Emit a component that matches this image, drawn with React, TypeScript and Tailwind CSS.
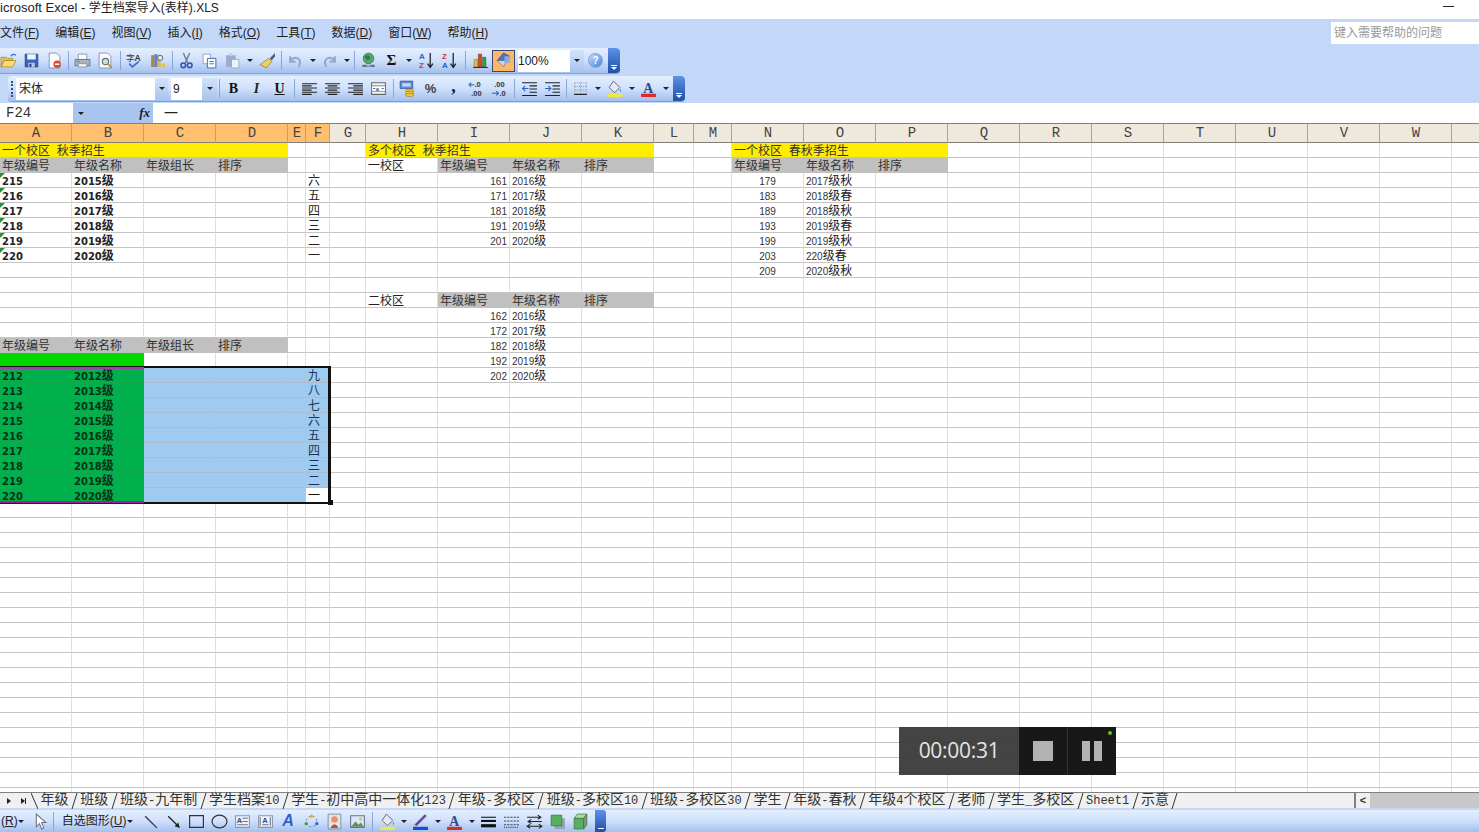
import type { ReactNode } from "react";

const colLetters = "ABCDEFGHIJKLMNOPQRSTUVWX".split("");
const ROWS = 44;

type Cell = { t?: string; cls?: string; span?: string; n?: number; bold?: boolean; tick?: boolean };

const GRID = "border-r border-b border-r-[#dedede] border-b-[#c4c4c4]";
const YELLOW = "bg-[#ffee00] border-r border-b border-r-[#ffee00] border-b-[#c4c4c4] text-[#333]";
const GREY = "bg-[#c0c0c0] border-r border-b border-r-[#c0c0c0] border-b-[#c0c0c0] text-[#333]";
const SEL_GREEN = "bg-[#00b04c] border-r border-b border-r-[#00b04c] border-b-[#12a84e] text-[#0a3018]";
const SEL_BLUE = "bg-[#9fcbf0] border-r border-b border-r-[#a6c9e8] border-b-[#aebccb] text-[#1d3350]";

const cells: Record<string, Cell> = {};
const put = (r: number, c: string, v: Cell) => {
  cells[r + c] = v;
};

put(1, "A", { t: "一个校区  秋季招生", cls: YELLOW, span: "col-span-4", n: 4 });
put(1, "H", { t: "多个校区  秋季招生", cls: YELLOW, span: "col-span-4", n: 4 });
put(1, "N", { t: "一个校区  春秋季招生", cls: YELLOW, span: "col-span-3", n: 3 });

const headA = ["年级编号", "年级名称", "年级组长", "排序"];
[2, 14].forEach((r) => {
  ["A", "B", "C", "D"].forEach((c, i) => put(r, c, { t: headA[i], cls: GREY }));
});
const headI = ["年级编号", "年级名称", "排序"];
[2, 11].forEach((r) => {
  ["I", "J", "K"].forEach((c, i) => put(r, c, { t: headI[i], cls: GREY }));
});
["N", "O", "P"].forEach((c, i) => put(2, c, { t: headI[i], cls: GREY }));
put(2, "H", { t: "一校区" });
put(11, "H", { t: "二校区" });

["215", "216", "217", "218", "219", "220"].forEach((id, i) => {
  put(3 + i, "A", { t: id, bold: true, tick: true });
  put(3 + i, "B", { t: `20${id.slice(1)}级`, bold: true });
  put(3 + i, "F", { t: "六五四三二一"[i] });
});

[
  ["161", "2016级"],
  ["171", "2017级"],
  ["181", "2018级"],
  ["191", "2019级"],
  ["201", "2020级"],
].forEach(([a, b], i) => {
  put(3 + i, "I", { t: a, cls: "text-right" });
  put(3 + i, "J", { t: b });
});
[
  ["162", "2016级"],
  ["172", "2017级"],
  ["182", "2018级"],
  ["192", "2019级"],
  ["202", "2020级"],
].forEach(([a, b], i) => {
  put(12 + i, "I", { t: a, cls: "text-right" });
  put(12 + i, "J", { t: b });
});
[
  ["179", "2017级秋"],
  ["183", "2018级春"],
  ["189", "2018级秋"],
  ["193", "2019级春"],
  ["199", "2019级秋"],
  ["203", "220级春"],
  ["209", "2020级秋"],
].forEach(([a, b], i) => {
  put(3 + i, "N", { t: a, cls: "text-center" });
  put(3 + i, "O", { t: b });
});

put(15, "A", { cls: "bg-[#00d800] border-r border-b border-[#00d800]" });
put(15, "B", { cls: "bg-[#00d800] border-r border-b border-[#00d800]" });

["212", "213", "214", "215", "216", "217", "218", "219", "220"].forEach((id, i) => {
  const r = 16 + i;
  put(r, "A", { t: id, bold: true, cls: SEL_GREEN });
  put(r, "B", { t: `20${id.slice(1)}级`, bold: true, cls: SEL_GREEN });
  ["C", "D", "E"].forEach((c) => put(r, c, { cls: SEL_BLUE }));
  put(r, "F", { t: "九八七六五四三二一"[i], cls: r === 24 ? "bg-white border-r border-b border-white text-[#111]" : SEL_BLUE });
});

function Mixed({ text, bold }: { text: string; bold?: boolean }) {
  const parts = text.split(/(\d+)/);
  return (
    <>
      {parts.map((p, i) =>
        /^\d+$/.test(p) ? (
          <span key={i} className={bold ? "font-['DejaVu_Sans'] text-[10px]" : "text-[10px] text-[#333]"}>
            {p}
          </span>
        ) : (
          <span key={i} className="whitespace-pre">
            {p}
          </span>
        ),
      )}
    </>
  );
}

function Sheet() {
  const body: ReactNode[] = [];
  for (let r = 1; r <= ROWS; r++) {
    let skip = 0;
    colLetters.forEach((c) => {
      if (skip > 0) {
        skip--;
        return;
      }
      const cell = cells[r + c];
      if (cell?.n) skip = cell.n - 1;
      const hasFrame = cell?.cls?.includes("border-r");
      body.push(
        <div
          key={r + c}
          className={`relative min-w-0 whitespace-nowrap px-[2px] text-[12px] leading-[17px] ${cell?.span ?? ""} ${
            hasFrame ? "" : GRID
          } ${cell?.cls ?? ""} ${cell?.bold ? "font-bold" : ""}`}
        >
          {cell?.tick && (
            <div className="absolute left-0 top-0 border-t-[5px] border-r-[5px] border-t-[#2a8f3c] border-r-transparent" />
          )}
          {cell?.t && <Mixed text={cell.t} bold={cell.bold} />}
        </div>,
      );
    });
  }
  return (
    <div className="relative min-h-0 flex-1 overflow-hidden bg-white">
      <div className="grid w-max grid-cols-[72px_72px_72px_72px_18px_24px_36px_72px_72px_72px_72px_40px_38px_72px_72px_72px_72px_72px_72px_72px_72px_72px_72px_72px] grid-rows-[20px] auto-rows-[15px]">
        {colLetters.map((c, i) => (
          <div
            key={c}
            className={`flex items-center justify-center border-y border-r border-y-[#808078] border-r-[#a8a498] pl-[1px] font-['Liberation_Mono'] text-[14px] text-[#444] ${
              i < 6 ? "bg-[#ffbe70]" : "bg-[#efe9dd]"
            }`}
          >
            {c === "X" ? "" : c}
          </div>
        ))}
        {body}
      </div>
      {/* selection frame */}
      <div className="absolute left-0 top-[243px] h-[138px] w-[331px] border-t-[2px] border-r-[3px] border-b-[2px] border-[#111]" />
      <div className="absolute left-0 top-[244px] h-[2px] w-[144px] bg-[#a040a0]" />
      <div className="absolute left-0 top-[378px] h-[2px] w-[144px] bg-[#a0209a]" />
      <div className="absolute left-[328px] top-[377px] h-[5px] w-[5px] bg-[#111]" />
      {/* recorder */}
      <div className="absolute left-[899px] top-[604px] flex h-[48px] w-[217px]">
        <div className="flex w-[120px] items-center justify-center bg-[#3a3a3a]/95 font-['Open_Sans'] text-[21px] tracking-[-0.3px] text-[#e4e4e4]">
          00:00:31
        </div>
        <div className="relative flex flex-1 items-center bg-[#181818]">
          <div className="ml-[14px] h-[20px] w-[20px] bg-[#b2b2b2]" />
          <div className="ml-[14px] h-full w-px bg-[#333]" />
          <div className="ml-[14px] flex gap-[4px]">
            <div className="h-[20px] w-[8px] bg-[#b2b2b2]" />
            <div className="h-[20px] w-[8px] bg-[#b2b2b2]" />
          </div>
          <div className="absolute right-[4px] top-[4px] h-[4px] w-[4px] rounded-full bg-[#6cc020]" />
        </div>
      </div>
    </div>
  );
}

function Drop({ w = "w-[12px]" }: { w?: string }) {
  return (
    <div className={`flex h-full items-center justify-center ${w}`}>
      <div className="border-x-[3px] border-t-[3px] border-x-transparent border-t-[#222]" />
    </div>
  );
}

function Sep({ w = "w-[5px]" }: { w?: string }) {
  return (
    <div className={`flex h-full items-center justify-center ${w}`}>
      <div className="h-[19px] w-px bg-[#8aa6d6]" />
    </div>
  );
}

function Handle() {
  return (
    <div className="ml-auto flex h-full w-[12px] flex-col items-center justify-end rounded-r-[3px] bg-gradient-to-b from-[#5d92e6] to-[#1f4fa6] pb-[3px]">
      <div className="mb-px h-px w-[6px] bg-white" />
      <div className="border-x-[3px] border-t-[3px] border-x-transparent border-t-white" />
    </div>
  );
}

const S = ({ children }: { children: ReactNode }) => (
  <svg viewBox="0 0 16 16" className="h-[17px] w-[17px]">
    {children}
  </svg>
);

const Lines = ({ kind }: { kind: "l" | "c" | "r" }) => {
  const short = kind === "l" ? "M1 5.5h9M1 9.5h9M1 13.5h9" : kind === "c" ? "M3.5 5.5h9M3.5 9.5h9M3.5 13.5h9" : "M6 5.5h9M6 9.5h9M6 13.5h9";
  return (
    <S>
      <path d={`M1 3.5h14M1 7.5h14M1 11.5h14 ${short}`} stroke="#222" strokeWidth="1" fill="none" />
    </S>
  );
};

const icons: Record<string, ReactNode> = {
  open: (
    <S>
      <path d="M1 5h5l1 1h5v2H4L1 14z" fill="#e8c050" stroke="#a07818" strokeWidth=".6" />
      <path d="M4 8h11l-3 6H1z" fill="#f8dc78" stroke="#a07818" strokeWidth=".6" />
      <path d="M10 4q2-3 5-1" stroke="#2c6ad0" fill="none" />
    </S>
  ),
  save: (
    <S>
      <path d="M2 2h12v12H2z" fill="#3c62b8" stroke="#1c3a80" strokeWidth=".6" />
      <path d="M4 2h8v5H4z" fill="#eef3fc" />
      <path d="M5 10h6v4H5z" fill="#b8c6e4" />
      <path d="M6 11h2v3H6z" fill="#2c4a94" />
    </S>
  ),
  perm: (
    <S>
      <path d="M3 1h7l3 3v11H3z" fill="#fbfcff" stroke="#6a7ea8" strokeWidth=".7" />
      <circle cx="10.5" cy="11.5" r="3.5" fill="#e04a30" />
      <path d="M8.5 11.5h4" stroke="#fff" strokeWidth="1.3" />
    </S>
  ),
  print: (
    <S>
      <path d="M4 2h8v5H4z" fill="#fff" stroke="#7a8498" strokeWidth=".7" />
      <path d="M1 7h14v6H1z" fill="#aab2c0" stroke="#5a6474" strokeWidth=".7" />
      <path d="M4 11h8v3H4z" fill="#f8f8f8" stroke="#7a8498" strokeWidth=".7" />
      <path d="M2.5 8.5h3v1h-3z" fill="#40a848" />
    </S>
  ),
  preview: (
    <S>
      <path d="M2 1h8l3 3v11H2z" fill="#fbfcff" stroke="#6a7ea8" strokeWidth=".7" />
      <circle cx="8" cy="9" r="3" fill="#bfe0f8" stroke="#6a6a50" />
      <path d="M10 11l4 4" stroke="#c09030" strokeWidth="1.6" />
    </S>
  ),
  spell: (
    <S>
      <text x="0" y="8" fontSize="8" fill="#333" fontFamily="Noto Sans CJK SC">字</text>
      <text x="8" y="8" fontSize="8" fontWeight="700" fill="#333" fontFamily="Liberation Sans">A</text>
      <path d="M3 11l3 3 6-5" stroke="#3a6ec8" strokeWidth="1.6" fill="none" />
    </S>
  ),
  research: (
    <S>
      <path d="M2 3h3v11H2z" fill="#a8884c" />
      <path d="M5 2h3v12H5z" fill="#6a80b8" />
      <path d="M8 3h3v11H8z" fill="#d8b860" />
      <circle cx="10.5" cy="5.5" r="2.5" fill="#d0e8f8" stroke="#444" strokeWidth=".7" />
      <path d="M12 11h3v3h-3z" fill="#e8c040" />
    </S>
  ),
  cut: (
    <S>
      <path d="M5 1l4 9M11 1L7 10" stroke="#707c90" strokeWidth="1.3" />
      <circle cx="5" cy="12.5" r="2.2" fill="none" stroke="#3058b0" strokeWidth="1.5" />
      <circle cx="11" cy="12.5" r="2.2" fill="none" stroke="#3058b0" strokeWidth="1.5" />
    </S>
  ),
  copy: (
    <S>
      <path d="M2 2h7v9H2z" fill="#fff" stroke="#7a8fb8" strokeWidth=".7" />
      <path d="M6 6h8v9H6z" fill="#f4f8ff" stroke="#3a5aa0" strokeWidth=".8" />
      <path d="M8 9h4M8 11h4" stroke="#5a78b8" />
    </S>
  ),
  paste: (
    <S>
      <path d="M2 3h9v11H2z" fill="#9aaccc" />
      <path d="M5 1h3v3H5z" fill="#c8d0e0" />
      <path d="M7 7h7v8H7z" fill="#eef2fa" stroke="#8a9cc0" strokeWidth=".7" />
    </S>
  ),
  painter: (
    <S>
      <path d="M15 1l-5 5 2 2 3-4z" fill="#4a5a80" />
      <path d="M9 6l3 3-5 6-6-3z" fill="#f0d060" stroke="#8a7020" strokeWidth=".6" />
    </S>
  ),
  undo: (
    <S>
      <path d="M3 4v5h5M3 9q3-5 7-3t1 8" fill="none" stroke="#93a8cc" strokeWidth="2" />
    </S>
  ),
  redo: (
    <S>
      <path d="M13 4v5H8M13 9q-3-5-7-3t-1 8" fill="none" stroke="#93a8cc" strokeWidth="2" />
    </S>
  ),
  globe: (
    <S>
      <circle cx="8" cy="6" r="5" fill="#58a868" stroke="#2a6a50" strokeWidth=".6" />
      <path d="M4 4q3-2 5 0t-2 4z" fill="#2a7a58" />
      <path d="M3 13h4M9 13h4" stroke="#6a7488" strokeWidth="2.2" strokeLinecap="round" />
      <path d="M6 13h4" stroke="#c0c8d4" />
    </S>
  ),
  sigma: <span className="font-['Liberation_Serif'] text-[15px] font-bold leading-none text-[#111]">Σ</span>,
  az: (
    <S>
      <text x="1" y="7" fontSize="7.5" fontWeight="700" fill="#2c62c0" fontFamily="Liberation Sans">A</text>
      <text x="1" y="15" fontSize="7.5" fontWeight="700" fill="#c04040" fontFamily="Liberation Sans">Z</text>
      <path d="M11.5 1v13M9 11l2.5 3.5L14 11" stroke="#222" fill="none" strokeWidth="1.2" />
    </S>
  ),
  za: (
    <S>
      <text x="1" y="7" fontSize="7.5" fontWeight="700" fill="#c04040" fontFamily="Liberation Sans">Z</text>
      <text x="1" y="15" fontSize="7.5" fontWeight="700" fill="#2c62c0" fontFamily="Liberation Sans">A</text>
      <path d="M11.5 1v13M9 11l2.5 3.5L14 11" stroke="#222" fill="none" strokeWidth="1.2" />
    </S>
  ),
  chart: (
    <S>
      <path d="M2 7h3v7H2z" fill="#e8c040" stroke="#806010" strokeWidth=".5" />
      <path d="M6 2h3v12H6z" fill="#d84828" stroke="#702010" strokeWidth=".5" />
      <path d="M10 5h3v9h-3z" fill="#3aa048" stroke="#105020" strokeWidth=".5" />
      <path d="M1 14.5h14" stroke="#333" />
    </S>
  ),
  drawing: (
    <S>
      <path d="M8 1l6 3-6 8-6-4z" fill="#4a74c8" stroke="#1c3a80" strokeWidth=".5" />
      <path d="M2 8l6 6 3-6z" fill="#c4d4f0" stroke="#4a5a80" strokeWidth=".5" />
      <path d="M9 4h5v6H9z" fill="#8aa8e0" />
    </S>
  ),
  help: (
    <div className="flex h-[15px] w-[15px] items-center justify-center rounded-full border border-[#7aa2e0] bg-gradient-to-br from-[#c4dcfa] to-[#4a82dc] text-[10px] font-bold leading-none text-white">
      ?
    </div>
  ),
  b: <span className="font-['Liberation_Serif'] text-[14px] font-bold leading-none text-[#111]">B</span>,
  i: <span className="font-['Liberation_Serif'] text-[14px] font-bold italic leading-none text-[#222]">I</span>,
  u: <span className="font-['Liberation_Serif'] text-[14px] font-bold leading-none text-[#111] underline">U</span>,
  left: <Lines kind="l" />,
  center: <Lines kind="c" />,
  right: <Lines kind="r" />,
  merge: (
    <S>
      <path d="M1.5 2.5h13v11h-13z" fill="#f4f6fa" stroke="#6a6a6a" />
      <path d="M1.5 5.5h13M1.5 10.5h13" stroke="#8a8a8a" />
      <path d="M2 6h12v4H2z" fill="#fff" />
      <text x="5.5" y="10" fontSize="5.5" fill="#222" fontFamily="Liberation Sans">a</text>
      <path d="M3 8h2M11 8h2" stroke="#2a6ac8" />
    </S>
  ),
  currency: (
    <S>
      <path d="M1 1h12v7H1z" fill="#5a8ad8" stroke="#2a4a90" strokeWidth=".6" />
      <path d="M3 3h8v3H3z" fill="#c4d8f4" />
      <ellipse cx="10" cy="10" rx="4" ry="1.6" fill="#f0c840" stroke="#8a6a10" strokeWidth=".5" />
      <ellipse cx="10" cy="12" rx="4" ry="1.6" fill="#f0c840" stroke="#8a6a10" strokeWidth=".5" />
      <ellipse cx="10" cy="14" rx="4" ry="1.6" fill="#f0c840" stroke="#8a6a10" strokeWidth=".5" />
    </S>
  ),
  pct: <span className="font-['Liberation_Sans'] text-[13px] font-bold leading-none text-[#444]">%</span>,
  comma: <span className="pb-[5px] font-['Liberation_Serif'] text-[18px] font-bold leading-none text-[#222]">,</span>,
  inc: (
    <S>
      <text x="6" y="7" fontSize="7" fontWeight="700" fill="#333" fontFamily="Liberation Sans">.0</text>
      <text x="3" y="15" fontSize="7" fontWeight="700" fill="#333" fontFamily="Liberation Sans">.00</text>
      <path d="M6 4.5H1M3 2.5l-2 2 2 2" stroke="#2c62c0" fill="none" />
    </S>
  ),
  dec: (
    <S>
      <text x="3" y="7" fontSize="7" fontWeight="700" fill="#333" fontFamily="Liberation Sans">.00</text>
      <text x="8" y="15" fontSize="7" fontWeight="700" fill="#333" fontFamily="Liberation Sans">.0</text>
      <path d="M1 12.5h6M5 10.5l2 2-2 2" stroke="#2c62c0" fill="none" />
    </S>
  ),
  indentL: (
    <S>
      <path d="M1 2.5h14M8 5.5h7M8 8.5h7M8 11.5h7M1 14.5h14" stroke="#222" />
      <path d="M7 8H2M4 5.5L1.5 8 4 10.5" stroke="#2c62c0" fill="none" />
    </S>
  ),
  indentR: (
    <S>
      <path d="M1 2.5h14M8 5.5h7M8 8.5h7M8 11.5h7M1 14.5h14" stroke="#222" />
      <path d="M1 8h5M4 5.5L6.5 8 4 10.5" stroke="#2c62c0" fill="none" />
    </S>
  ),
  borders: (
    <S>
      <path d="M2.5 2.5h11M2.5 6h11M2.5 9.5h11M2.5 2.5v10M8 2.5v10M13.5 2.5v10" stroke="#9aa2b0" strokeDasharray="1 1" fill="none" />
      <path d="M2 13.5h12" stroke="#222" />
    </S>
  ),
  fillY: (
    <S>
      <path d="M7 1l6 6-5 5-5-5z" fill="#e4eaf4" stroke="#4a5a70" strokeWidth=".8" />
      <path d="M13 8q2 2 1 3t-1-3" fill="#4a7ac8" />
      <path d="M1 13h14v3H1z" fill="#f0e840" />
    </S>
  ),
  fontR: (
    <S>
      <text x="3" y="12" fontSize="13" fontWeight="700" fill="#2c4a90" fontFamily="Liberation Serif">A</text>
      <path d="M1 13h14v3H1z" fill="#e02828" />
    </S>
  ),
  lineB: (
    <S>
      <path d="M3 12L13 2" stroke="#6a4aa0" strokeWidth="2.4" />
      <path d="M2 12l2 1" stroke="#e8c040" strokeWidth="2" />
      <path d="M1 13h14v3H1z" fill="#1050d8" />
    </S>
  ),
  cursor: (
    <S>
      <path d="M5 1v12l3-3 2 5 2-1-2-5h4z" fill="#fff" stroke="#6a7488" />
    </S>
  ),
  line: (
    <S>
      <path d="M3 3l11 11" stroke="#333" strokeWidth="1.2" />
    </S>
  ),
  arrow: (
    <S>
      <path d="M3 3l10 10" stroke="#222" strokeWidth="1.2" />
      <path d="M14 14l-5-1.5 3.5-3.5z" fill="#222" />
    </S>
  ),
  rect: (
    <S>
      <path d="M1.5 2.5h13v11h-13z" fill="none" stroke="#333" strokeWidth="1.1" />
    </S>
  ),
  ellipse: (
    <S>
      <ellipse cx="8" cy="8" rx="7" ry="6" fill="none" stroke="#333" strokeWidth="1.1" />
    </S>
  ),
  textbox: (
    <S>
      <path d="M1.5 2.5h13v11h-13z" fill="#eef2fa" stroke="#8a94a8" />
      <text x="2.5" y="9.5" fontSize="7" fontWeight="700" fill="#2c4a90" fontFamily="Liberation Sans">A</text>
      <path d="M8 5h5M8 8h5M3 11h10" stroke="#6a7488" />
    </S>
  ),
  vtext: (
    <S>
      <path d="M1.5 2.5h13v11h-13z" fill="#eef2fa" stroke="#8a94a8" />
      <text x="5" y="9" fontSize="7" fontWeight="700" fill="#2c4a90" fontFamily="Liberation Sans">A</text>
      <path d="M3 4v8M12.5 4v8M5 11h6" stroke="#6a7488" />
    </S>
  ),
  wordart: <span className="font-['Liberation_Sans'] text-[16px] font-bold italic leading-none text-[#2f62c8]">A</span>,
  diagram: (
    <S>
      <circle cx="8" cy="8" r="5" fill="none" stroke="#8a94a8" strokeDasharray="2 2" />
      <circle cx="8" cy="3" r="1.6" fill="#e8b030" />
      <circle cx="3" cy="10" r="1.6" fill="#3aa048" />
      <circle cx="13" cy="10" r="1.6" fill="#3a68c8" />
    </S>
  ),
  clip: (
    <S>
      <path d="M2 1h12v14H2z" fill="#dfe4ec" stroke="#6a7488" strokeWidth=".7" />
      <circle cx="8" cy="6" r="3" fill="#e89060" />
      <path d="M4 14q4-7 8 0z" fill="#c05030" />
    </S>
  ),
  picture: (
    <S>
      <path d="M1.5 2.5h13v11h-13z" fill="#d8e8f8" stroke="#6a7488" />
      <path d="M2 13l4-5 3 3 2-2 3 4z" fill="#6a8a58" />
      <circle cx="11" cy="5.5" r="1.5" fill="#f0c040" />
    </S>
  ),
  lineStyle: (
    <S>
      <path d="M1 4h14" stroke="#111" strokeWidth="1" />
      <path d="M1 7.5h14" stroke="#111" strokeWidth="2" />
      <path d="M1 12h14" stroke="#111" strokeWidth="3" />
    </S>
  ),
  dash: (
    <S>
      <path d="M1 4h14M1 7.5h14M1 11h14" stroke="#444" strokeDasharray="2 1" />
      <path d="M1 13.5h14" stroke="#444" strokeDasharray="1 1" />
    </S>
  ),
  arrows: (
    <S>
      <path d="M1 4h13M11 2l3 2-3 2M15 8H2M5 6L2 8l3 2M1 12.5h14M4 10.5l-3 2 3 2M12 10.5l3 2-3 2" stroke="#222" fill="none" />
    </S>
  ),
  shadow: (
    <S>
      <path d="M5 5h10v10H5z" fill="#9aa2b0" />
      <path d="M2 2h10v10H2z" fill="#58b060" stroke="#2a6a30" strokeWidth=".6" />
    </S>
  ),
  cube: (
    <S>
      <path d="M2 5h9v10H2z" fill="#58b060" stroke="#2a6a30" strokeWidth=".6" />
      <path d="M2 5l3-4h9l-3 4z" fill="#a8dca8" stroke="#2a6a30" strokeWidth=".6" />
      <path d="M11 5l3-4v10l-3 4z" fill="#8a9488" stroke="#2a6a30" strokeWidth=".6" />
    </S>
  ),
};

function Btn({ name, active }: { name: string; active?: boolean }) {
  return (
    <div
      className={`flex h-[22px] w-[23px] shrink-0 items-center justify-center ${
        active ? "border border-[#3a4a70] bg-[#fbb868]" : ""
      }`}
    >
      {icons[name]}
    </div>
  );
}

function Menu({ label, k }: { label: string; k: string }) {
  return (
    <span className="text-[12px] text-[#222]">
      {label}(<span className="underline">{k}</span>)
    </span>
  );
}

const tabs = [
  "班级",
  "班级-九年制",
  "学生档案10",
  "学生-初中高中一体化123",
  "年级-多校区",
  "班级-多校区10",
  "班级-多校区30",
  "学生",
  "年级-春秋",
  "年级4个校区",
  "老师",
  "学生_多校区",
];

function TabText({ text }: { text: string }) {
  return (
    <span className="px-[2.4px]">
      {text.split(/([-_0-9A-Za-z]+)/).map((p, i) =>
        /^[-_0-9A-Za-z]+$/.test(p) ? (
          <span key={i} className="text-[12px]">
            {p}
          </span>
        ) : (
          <span key={i}>{p}</span>
        ),
      )}
    </span>
  );
}

function Slash({ back }: { back?: boolean }) {
  return (
    <svg viewBox="0 0 7 16" className="h-[16px] w-[7px] shrink-0">
      <path d={back ? "M0 0L7 16" : "M1 16L6 0"} stroke="#333" fill="none" />
    </svg>
  );
}

function TabBar() {
  return (
    <div className="flex h-[16px] shrink-0 border-t border-[#808080] bg-[#f0f0f0]">
      <div className="flex w-[31px] items-center justify-around pl-[2px] text-[#222]">
        <div className="border-y-[3px] border-l-[4px] border-y-transparent border-l-[#222]" />
        <div className="flex items-center">
          <div className="border-y-[3px] border-l-[4px] border-y-transparent border-l-[#222]" />
          <div className="h-[6px] w-px bg-[#222]" />
        </div>
      </div>
      <div className="flex h-[15px] items-center font-['Liberation_Mono','Noto_Sans_CJK_SC',monospace] text-[14px] leading-[15px] text-[#333]">
        <Slash back />
        <TabText text="年级" />
        <Slash />
        {tabs.map((t) => (
          <div key={t} className="flex items-center">
            <TabText text={t} />
            <Slash />
          </div>
        ))}
        <TabText text="Sheet1" />
        <Slash />
        <TabText text="示意" />
        <Slash />
      </div>
      <div className="ml-auto flex w-[125px] shrink-0">
        <div className="h-[15px] w-[2px] border-x border-x-[#808080] bg-white" />
        <div className="flex w-[14px] items-center justify-center font-['Liberation_Sans'] text-[11px] font-bold leading-none text-[#333]">&lt;</div>
        <div className="flex-1 bg-[#c8c8c8]" />
      </div>
    </div>
  );
}

export default function App() {
  return (
    <div className="flex h-screen w-full flex-col overflow-hidden bg-[#c3d8f8] font-['Liberation_Sans','Noto_Sans_CJK_SC',sans-serif] text-[#222]">
      {/* Title */}
      <div className="flex h-[19px] shrink-0 items-center justify-between bg-white pb-[3px] text-[12px] text-[#222]">
        <span>
          <span className="text-[13px]">icrosoft Excel - </span>学生档案导入(表样).XLS
        </span>
        <div className="mb-[3px] mr-[25px] h-px w-[11px] bg-[#222]" />
      </div>

      {/* Menu */}
      <div className="flex h-[28px] shrink-0 items-center">
        <div className="flex gap-[16px]">
          <Menu label="文件" k="F" />
          <Menu label="编辑" k="E" />
          <Menu label="视图" k="V" />
          <Menu label="插入" k="I" />
          <Menu label="格式" k="O" />
          <Menu label="工具" k="T" />
          <Menu label="数据" k="D" />
          <Menu label="窗口" k="W" />
          <Menu label="帮助" k="H" />
        </div>
        <div className="ml-auto flex h-[22px] w-[148px] items-center bg-white pl-[3px] text-[12px] text-[#999]">键入需要帮助的问题</div>
      </div>

      {/* Standard toolbar */}
      <div className="mt-px flex h-[26px] w-[620px] shrink-0 items-center overflow-hidden rounded-r-[4px] border-b border-[#7f9fd6] bg-gradient-to-b from-[#e4effe] via-[#cfe0fb] to-[#a4c0ee]">
        <div className="-ml-[3px] flex h-full items-center">
          <Btn name="open" />
          <Btn name="save" />
          <Btn name="perm" />
          <Sep />
          <Btn name="print" />
          <Btn name="preview" />
          <Sep w="w-[6px]" />
          <Btn name="spell" />
          <Btn name="research" />
          <Sep w="w-[6px]" />
          <Btn name="cut" />
          <Btn name="copy" />
          <Btn name="paste" />
          <Drop />
          <Btn name="painter" />
          <Sep />
          <Btn name="undo" />
          <Drop w="w-[11px]" />
          <Btn name="redo" />
          <Drop w="w-[11px]" />
          <Sep />
          <Btn name="globe" />
          <Btn name="sigma" />
          <Drop />
          <Btn name="az" />
          <Btn name="za" />
          <Sep w="w-[8px]" />
          <Btn name="chart" />
          <Btn name="drawing" active />
          <div className="ml-[3px] flex h-[22px] w-[66px] items-center justify-between bg-white text-[12px]">
            100%
            <div className="flex h-full w-[14px] items-center justify-center bg-gradient-to-b from-[#d2e2fa] to-[#a8c4ee]">
              <div className="border-x-[3px] border-t-[3px] border-x-transparent border-t-[#222]" />
            </div>
          </div>
          <Btn name="help" />
        </div>
        <Handle />
      </div>

      {/* Formatting toolbar */}
      <div className="ml-[8px] mt-[2px] flex h-[26px] w-[677px] shrink-0 items-center overflow-hidden rounded-[4px] border-b border-[#7f9fd6] bg-gradient-to-b from-[#e4effe] via-[#cfe0fb] to-[#a4c0ee]">
        <div className="ml-[3px] mr-[3px] h-[16px] w-[2px] border-l-2 border-dotted border-[#35507f]" />
        <div className="flex h-[22px] w-[152px] items-center justify-between bg-white pl-[3px] text-[12px]">
          宋体
          <div className="flex h-full w-[13px] items-center justify-center bg-gradient-to-b from-[#d2e2fa] to-[#a8c4ee]">
            <div className="border-x-[3px] border-t-[3px] border-x-transparent border-t-[#222]" />
          </div>
        </div>
        <div className="ml-[3px] flex h-[22px] w-[46px] items-center justify-between bg-white pl-[2px] text-[12px]">
          9
          <div className="flex h-full w-[15px] items-center justify-center bg-gradient-to-b from-[#d2e2fa] to-[#a8c4ee]">
            <div className="border-x-[3px] border-t-[3px] border-x-transparent border-t-[#222]" />
          </div>
        </div>
        <Sep />
        <Btn name="b" />
        <Btn name="i" />
        <Btn name="u" />
        <Sep w="w-[7px]" />
        <Btn name="left" />
        <Btn name="center" />
        <Btn name="right" />
        <Btn name="merge" />
        <Sep w="w-[6px]" />
        <Btn name="currency" />
        <Btn name="pct" />
        <Btn name="comma" />
        <Btn name="inc" />
        <Btn name="dec" />
        <Sep w="w-[7px]" />
        <Btn name="indentL" />
        <Btn name="indentR" />
        <Sep />
        <Btn name="borders" />
        <Drop w="w-[11px]" />
        <Btn name="fillY" />
        <Drop w="w-[11px]" />
        <Btn name="fontR" />
        <Drop w="w-[11px]" />
        <Handle />
      </div>

      {/* Formula bar */}
      <div className="mt-px flex h-[20px] shrink-0 items-center">
        <div className="flex h-full w-[73px] items-center bg-white pl-[6px] font-['Liberation_Mono'] text-[14px] text-[#333]">F24</div>
        <div className="flex h-full w-[80px] items-center justify-between bg-[#a9c4ee] pl-[5px] pr-[3px]">
          <div className="border-x-[3px] border-t-[3px] border-x-transparent border-t-[#222]" />
          <span className="font-['Liberation_Serif'] text-[13px] font-bold italic text-[#222]">fx</span>
        </div>
        <div className="flex h-full flex-1 items-center bg-white pl-[11px] text-[14px] text-[#222]">一</div>
      </div>

      <Sheet />
      <TabBar />

      {/* Drawing toolbar */}
      <div className="mt-[2px] flex h-[22px] shrink-0 items-center bg-gradient-to-b from-[#e4effe] via-[#cfe0fb] to-[#a4c0ee]">
        <div className="flex h-full w-[606px] items-center text-[12px]">
          <span className="w-[15px] pl-[1px]">
            (<span className="underline">R</span>)
          </span>
          <Drop />
          <div className="ml-[1px]">
            <Btn name="cursor" />
          </div>
          <Sep />
          <span className="ml-[6px] w-[63px] whitespace-nowrap">
            自选图形(<span className="underline">U</span>)
          </span>
          <Drop w="w-[10px]" />
          <div className="w-[4px]" />
          <Btn name="line" />
          <Btn name="arrow" />
          <Btn name="rect" />
          <Btn name="ellipse" />
          <Btn name="textbox" />
          <Btn name="vtext" />
          <Btn name="wordart" />
          <Btn name="diagram" />
          <Btn name="clip" />
          <Btn name="picture" />
          <Sep w="w-[7px]" />
          <Btn name="fillY" />
          <Drop w="w-[11px]" />
          <Btn name="lineB" />
          <Drop w="w-[11px]" />
          <Btn name="fontR" />
          <Drop w="w-[11px]" />
          <Btn name="lineStyle" />
          <Btn name="dash" />
          <Btn name="arrows" />
          <Btn name="shadow" />
          <Btn name="cube" />
          <div className="ml-[3px] flex h-full w-[11px] flex-col items-center justify-end rounded-r-[3px] bg-gradient-to-b from-[#5d92e6] to-[#1f4fa6] pb-[3px]">
            <div className="h-px w-[6px] bg-white" />
          </div>
        </div>
      </div>
    </div>
  );
}
